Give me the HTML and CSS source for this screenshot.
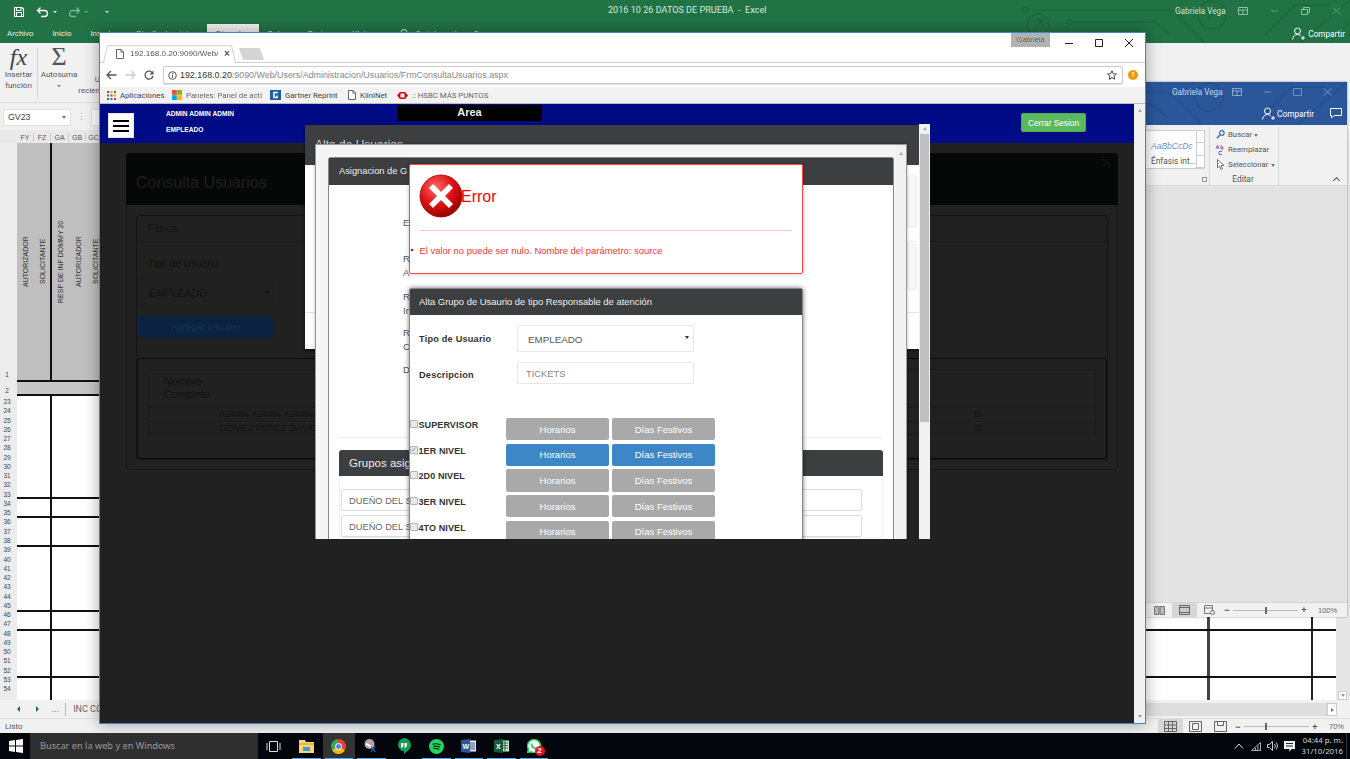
FILE: index.html
```html
<!DOCTYPE html>
<html lang="es">
<head>
<meta charset="utf-8">
<title>Consulta Usuarios</title>
<link rel="stylesheet" href="styles.css">
</head>
<body>
<div class="desktop">

  <section class="excel">
    <svg class="circuit" viewBox="0 0 350 43" width="350" height="43"><g fill="none" stroke="#1b6a3d" stroke-width="1.6"><circle cx="25" cy="10" r="2.5"/><path d="M28 10H172L205 43"/><circle cx="69" cy="22" r="2.5"/><path d="M72 22H155L170 35"/><circle cx="38" cy="25" r="11"/><path d="M33 30 42 21M36 20h7v7"/><circle cx="212" cy="15" r="14"/><path d="M207 20 217 10M209 9h9v9"/><path d="M265 35 295 5H330M300 43 350 0M330 43 350 22"/></g></svg>
    <header class="xl-title">
      <div class="qat">
        <svg width="12" height="12" viewBox="0 0 12 12"><path d="M1.5 1.5h7.5l1.5 1.5v7.5h-9z M3.5 1.5v3h4.5v-3M3.5 10.500v-4h5v4" fill="none" stroke="#fff" stroke-width="1.1"/></svg>
        <svg width="14" height="12" viewBox="0 0 14 12"><path d="M2 4.500h6.500a3 3 0 0 1 0 6H5M4.500 1.500 1.500 4.500l3 3" fill="none" stroke="#fff" stroke-width="1.3"/></svg>
        <span class="caret-w"></span>
        <svg class="dim" width="14" height="12" viewBox="0 0 14 12"><path d="M12 4.500H5.500a3 3 0 0 0 0 6H9M9.500 1.500l3 3-3 3" fill="none" stroke="#7fb59a" stroke-width="1.300"/></svg>
        <span class="caret-w dim-caret"></span>
        <span class="caret-w custom"></span>
      </div>
      <p class="xl-doc">2016 10 26 DATOS DE PRUEBA  -  Excel</p>
      <div class="win-ctl">
        <span class="win-user">Gabriela Vega</span>
        <svg width="10" height="8" viewBox="0 0 10 8"><path d="M.5.500h9v7h-9zM.5 3h9M5 3v4.500" fill="none" stroke="#8fbfa5"/></svg>
        <svg width="9" height="8" viewBox="0 0 9 8"><path d="M1 4h7" stroke="#5fa17e"/></svg>
        <svg width="9" height="8" viewBox="0 0 9 8"><path d="M.5 2.500h6v5h-6zM2.500 2.500v-2h6v5h-2" fill="none" stroke="#8fbfa5"/></svg>
        <svg width="9" height="8" viewBox="0 0 9 8"><path d="M.5.500l8 7M8.500.500l-8 7" stroke="#5fa17e"/></svg>
      </div>
    </header>
    <nav class="xl-tabs">
      <span class="xl-tab">Archivo</span><span class="xl-tab">Inicio</span><span class="xl-tab">Insertar</span><span class="xl-tab">Diseño de página</span><span class="xl-tab xl-tab-on">Fórmulas</span><span class="xl-tab">Datos</span><span class="xl-tab">Revisar</span><span class="xl-tab">Vista</span>
      <svg class="xl-lens" width="9" height="9" viewBox="0 0 9 9"><circle cx="5" cy="3.500" r="3" fill="none" stroke="#e8f2ec"/><path d="M3 6 .5 8.500" stroke="#e8f2ec"/></svg>
      <span class="xl-search">¿Qué desea hacer?</span>
      <span class="xl-share">
        <svg width="13" height="13" viewBox="0 0 13 13"><circle cx="5.500" cy="4" r="3" fill="none" stroke="#fff"/><path d="M.5 12.500c.5-3.500 2.500-5 5-5 1.500 0 2.500.5 3.500 1.500M9 11h4M11 9v4" fill="none" stroke="#fff"/></svg>
        Compartir
      </span>
    </nav>
    <div class="xl-ribbon">
      <div class="xl-tool"><i class="fx">fx</i><span>Insertar<br>función</span></div>
      <div class="xl-sep"></div>
      <div class="xl-tool"><b class="sigma">Σ</b><span>Autosuma</span><span class="tiny-caret"></span></div>
      <div class="xl-tool xl-tool-rec"><span>U<br>recien</span></div>
    </div>
    <div class="xl-formula">
      <div class="namebox"><span>GV23</span><i class="caret-g"></i></div>
      <span class="fdots">⋮</span>
      <div class="fbox"></div>
    </div>
    <div class="xl-colhead">
      <span class="ch corner"></span><span class="ch w17">FY</span><span class="ch w17">FZ</span><span class="ch w18">GA</span><span class="ch w17">GB</span><span class="ch w16">GC</span>
    </div>
    <div class="xl-sheet">
      <div class="rowheads">
        <span class="rh rh-1">1</span><span class="rh rh-2">2</span>
        <span class="rh">23</span><span class="rh">24</span><span class="rh">25</span><span class="rh">26</span><span class="rh">27</span><span class="rh">28</span><span class="rh">29</span><span class="rh">30</span><span class="rh">31</span><span class="rh">32</span><span class="rh">33</span><span class="rh">34</span><span class="rh">35</span><span class="rh">36</span><span class="rh">37</span><span class="rh">38</span><span class="rh">39</span><span class="rh">40</span><span class="rh">41</span><span class="rh">42</span><span class="rh">43</span><span class="rh">44</span><span class="rh">45</span><span class="rh">46</span><span class="rh">47</span><span class="rh">48</span><span class="rh">49</span><span class="rh">50</span><span class="rh">51</span><span class="rh">52</span><span class="rh">53</span><span class="rh">54</span>
      </div>
      <div class="cells">
        <div class="r-head">
          <span class="vt w17">AUTORIZADOR</span><span class="vt w17 vt-end">SOLICITANTE</span><span class="vt w18">RESP DE INF DOMMY 20</span><span class="vt w17">AUTORIZADOR</span><span class="vt w16">SOLICITANTE</span>
        </div>
        <div class="r-sub"></div>
        <div class="r-data h103"><i class="c1"></i><i class="c2"></i><i class="c3"></i></div>
        <div class="r-data h19"><i class="c1"></i><i class="c2"></i><i class="c3"></i></div>
        <div class="r-data h29"><i class="c1"></i><i class="c2"></i><i class="c3"></i></div>
        <div class="r-data h65"><i class="c1"></i><i class="c2"></i><i class="c3"></i></div>
        <div class="r-data h19"><i class="c1"></i><i class="c2"></i><i class="c3"></i></div>
        <div class="r-data h47"><i class="c1"></i><i class="c2"></i><i class="c3"></i></div>
        <div class="r-data h22"><i class="c1"></i><i class="c2"></i><i class="c3"></i></div>
      </div>
      <div class="xl-vscroll"><span class="sb-btn"><i class="tri-d"></i></span></div>
    </div>
    <div class="xl-sheettabs">
      <i class="nav-l"></i><i class="nav-r"></i><span class="dots">...</span><span class="tabsep"></span><span class="sheetname">INC CO</span>
      <div class="hscroll"><span class="sb-btn"><i class="tri-r"></i></span></div>
    </div>
    <footer class="xl-status">
      <span>Listo</span>
      <div class="views">
        <span class="view view-on"><svg width="13" height="11" viewBox="0 0 13 11"><path d="M.5.500h12v10H.5zM.5 4h12M.5 7.500h12M4.500.500v10M8.500.500v10" fill="none" stroke="#666"/></svg></span>
        <span class="view"><svg width="13" height="11" viewBox="0 0 13 11"><path d="M.5.500h12v10H.5zM3.500 2.500h6v6h-6z" fill="none" stroke="#666"/></svg></span>
        <span class="view"><svg width="13" height="11" viewBox="0 0 13 11"><path d="M.5.500h12v10H.5zM3.500.500v4h6v-4" fill="none" stroke="#666"/></svg></span>
        <span class="zm">−</span><span class="slider"><i class="thumb thumb-70"></i></span><span class="zm">+</span><span class="pct">70%</span>
      </div>
    </footer>
  </section>

  <section class="word">
    <svg class="circuit" viewBox="0 0 350 43" width="350" height="43"><g fill="none" stroke="#26508f" stroke-width="1.600"><path d="M0 10H172L205 43M0 22H155L170 35"/><circle cx="212" cy="15" r="14"/><path d="M265 35 295 5H330M300 43 350 0"/></g></svg>
    <header class="wd-title">
      <span class="win-user">Gabriela Vega</span>
      <svg width="10" height="8" viewBox="0 0 10 8"><path d="M.5.500h9v7h-9zM.5 3h9M5 3v4.500" fill="none" stroke="#8fa8d0"/></svg>
      <svg width="9" height="8" viewBox="0 0 9 8"><path d="M1 4h7" stroke="#6f8fc2"/></svg>
      <svg width="9" height="8" viewBox="0 0 9 8"><path d="M.5.500h8v7h-8z" fill="none" stroke="#6f8fc2"/></svg>
      <svg width="9" height="8" viewBox="0 0 9 8"><path d="M.5.500l8 7M8.500.500l-8 7" stroke="#6f8fc2"/></svg>
    </header>
    <div class="wd-share">
      <svg width="13" height="13" viewBox="0 0 13 13"><circle cx="5.500" cy="4" r="3" fill="none" stroke="#fff"/><path d="M.5 12.500c.5-3.500 2.500-5 5-5 1.500 0 2.500.5 3.500 1.500M9 11h4M11 9v4" fill="none" stroke="#fff"/></svg>
      <span>Compartir</span>
      <svg class="wd-comment" width="12" height="11" viewBox="0 0 12 11"><path d="M.5.500h11v7H4l-2.500 2.500v-2.500h-1z" fill="none" stroke="#fff"/></svg>
    </div>
    <div class="wd-ribbon">
      <div class="gallery">
        <div class="style-card"><i class="sample">AaBbCcDc</i><span>Énfasis int...</span></div>
        <div class="g-btns"><i></i><i></i><i></i></div>
      </div>
      <span class="launcher"></span>
      <div class="edit-group">
        <span class="edit-item"><span class="ei"><svg width="9" height="9" viewBox="0 0 9 9"><circle cx="5.800" cy="3" r="2.300" fill="none" stroke="#3a6fb5" stroke-width="1.200"/><path d="M4 5 .8 8.200" stroke="#3a6fb5" stroke-width="1.500"/></svg></span>Buscar <i class="caret-g"></i></span>
        <span class="edit-item"><span class="ei"><svg width="11" height="11" viewBox="0 0 11 11"><path d="M1 5 2.500 1 4 5M1.500 3.500h2M6 1v4h2V3H6" fill="none" stroke="#8a4fa8" stroke-width=".8"/><path d="M7 7.500H4v3h3" fill="none" stroke="#3a6fb5" stroke-width=".9"/></svg></span>Reemplazar</span>
        <span class="edit-item"><span class="ei"><svg width="9" height="11" viewBox="0 0 9 11"><path d="M1.500.500v8.500l2-2 1.500 3.500 1.500-.7-1.500-3.300h3z" fill="#fff" stroke="#777"/></svg></span>Seleccionar<i class="caret-g"></i></span>
        <span class="edit-name">Editar</span>
      </div>
      <i class="collapse"></i>
    </div>
    <div class="wd-doc"></div>
    <footer class="wd-status">
      <span class="view"><svg width="11" height="9" viewBox="0 0 11 9"><path d="M.5.500h4.500v8H.5zM6 .500h4.500v8H6z" fill="#bbb" stroke="#777"/></svg></span>
      <span class="view view-on"><svg width="11" height="10" viewBox="0 0 11 10"><path d="M.5.500h10v9H.5zM.5 2.500h10M.5 7.500h10" fill="#ccc" stroke="#666"/></svg></span>
      <span class="view"><svg width="11" height="10" viewBox="0 0 11 10"><path d="M.5.500h8v8H.5zM.5 3h8" fill="none" stroke="#777"/><circle cx="8.500" cy="7.500" r="2" fill="#eee" stroke="#666"/></svg></span>
      <span class="zm">−</span><span class="slider slider-wd"><i class="thumb thumb-100"></i></span><span class="zm">+</span><span class="pct">100%</span>
    </footer>
  </section>

  <section class="chrome">
    <div class="ch-tabs">
      <div class="ch-tab">
        <svg width="8" height="10" viewBox="0 0 8 10"><path d="M.5.500h4.500l2.500 2.500v6.500h-7zM5 .5v2.500h2.500" fill="#fff" stroke="#666"/></svg>
        <span class="ch-tabtext">192.168.0.20:9090/Web/</span>
        <span class="ch-tabx">×</span>
      </div>
      <span class="ch-new"></span>
      <span class="ch-badge">Gabriela</span>
      <div class="ch-ctl">
        <svg width="10" height="10" viewBox="0 0 10 10"><path d="M1 5.500h8" stroke="#222" stroke-width="1"/></svg>
        <svg width="10" height="10" viewBox="0 0 10 10"><path d="M1.500 1.500h7v7h-7z" fill="none" stroke="#222"/></svg>
        <svg width="10" height="10" viewBox="0 0 10 10"><path d="M1 1l8 8M9 1 1 9" stroke="#222"/></svg>
      </div>
    </div>
    <div class="ch-tool">
      <svg width="11" height="10" viewBox="0 0 11 10"><path d="M10.500 5H1.500M5 1 1 5l4 4" fill="none" stroke="#555" stroke-width="1.300"/></svg>
      <svg width="11" height="10" viewBox="0 0 11 10"><path d="M.5 5h9M6 1l4 4-4 4" fill="none" stroke="#ccc" stroke-width="1.300"/></svg>
      <svg width="10" height="10" viewBox="0 0 10 10"><path d="M8.500 3A4 4 0 1 0 9 6" fill="none" stroke="#555" stroke-width="1.300"/><path d="M9.500.500v4h-4z" fill="#555"/></svg>
      <div class="omni">
        <svg width="9" height="9" viewBox="0 0 9 9"><circle cx="4.500" cy="4.500" r="3.800" fill="none" stroke="#555"/><path d="M4.500 3.800v3M4.500 2v1" stroke="#555"/></svg>
        <span class="url"><b>192.168.0.20</b>:9090/Web/Users/Administracion/Usuarios/FrmConsultaUsuarios.aspx</span>
        <svg class="star" width="10" height="10" viewBox="0 0 10 10"><path d="M5 .8 6.300 3.700l3.100.3-2.300 2.100.7 3.100L5 7.600 2.200 9.200l.7-3.100L.6 4l3.100-.3z" fill="none" stroke="#444"/></svg>
      </div>
      <span class="warn">!</span>
    </div>
    <div class="ch-marks">
      <span class="mark"><svg width="9" height="9" viewBox="0 0 9 9"><g><rect width="2" height="2" fill="#d93025"/><rect x="3.500" width="2" height="2" fill="#f9ab00"/><rect x="7" width="2" height="2" fill="#1e8e3e"/><rect y="3.500" width="2" height="2" fill="#1a73e8"/><rect x="3.500" y="3.500" width="2" height="2" fill="#d93025"/><rect x="7" y="3.500" width="2" height="2" fill="#f9ab00"/><rect y="7" width="2" height="2" fill="#1e8e3e"/><rect x="3.500" y="7" width="2" height="2" fill="#1a73e8"/><rect x="7" y="7" width="2" height="2" fill="#d93025"/></g></svg>Aplicaciones</span>
      <span class="mark"><svg width="10" height="10" viewBox="0 0 10 10"><rect width="4.800" height="4.800" fill="#f25022"/><rect x="5.200" width="4.800" height="4.800" fill="#7fba00"/><rect y="5.200" width="4.800" height="4.800" fill="#00a4ef"/><rect x="5.200" y="5.200" width="4.800" height="4.800" fill="#ffb900"/></svg><span class="fade">Paneles: Panel de acti</span></span>
      <span class="mark"><svg width="11" height="10" viewBox="0 0 11 10"><rect width="11" height="10" fill="#1f5f9e"/><path d="M8 2.500H4v5h3V5.500" fill="none" stroke="#fff" stroke-width="1.500"/></svg>Gartner Reprint</span>
      <span class="mark"><svg width="8" height="10" viewBox="0 0 8 10"><path d="M.5.500h4.500l2.500 2.500v6.500h-7zM5 .5v2.500h2.500" fill="#fff" stroke="#666"/></svg>KiiniNet</span>
      <span class="mark"><svg width="11" height="7" viewBox="0 0 11 7"><path d="M0 3.500 3 0h5l3 3.500L8 7H3z" fill="#db0011"/><rect x="3.500" y="1.500" width="4" height="4" fill="#fff"/></svg><span class="fade">:: HSBC MÁS PUNTOS</span></span>
    </div>
    <div class="ch-page">
      <div class="page-main">
        <header class="app-head">
          <button class="burger"><i></i><i></i><i></i></button>
          <div class="app-user"><span>ADMIN ADMIN ADMIN</span><span>EMPLEADO</span></div>
          <div class="app-area">Area</div>
          <button class="logout">Cerrar Sesion</button>
        </header>
        <main class="app-body">
          <div class="card">
            <div class="card-head"><h1>Consulta Usuarios</h1><span class="card-x">×</span></div>
            <div class="card-body">
              <div class="filters">
                <div class="filters-head">Filtros</div>
                <div class="filters-body">
                  <label class="f-label">Tipo de Usuario</label>
                  <div class="f-select">EMPLEADO<i class="tri-dk"></i></div>
                  <div class="f-btn">Agregar Usuario</div>
                </div>
                <div class="results">
                  <div class="res-table">
                    <div class="res-head">Nombre<br>Completo</div>
                    <div class="res-row"><span class="r-name">ADMIN ADMIN ADMIN</span><span class="r-si">SI</span></div>
                    <div class="res-row"><span class="r-name">GOMEZ PEREZ DAVID</span><span class="r-si">SI</span></div>
                  </div>
                </div>
              </div>
            </div>
          </div>
        </main>

        <div class="overlay">
          <div class="modal-a">
            <div class="modal-a-head">Alta de Usuarios</div>
            <div class="modal-a-body"><i class="ghost g1"></i><i class="ghost g2"></i></div>
            <div class="modal-a-foot"></div>
          </div>
          <div class="modal-a-scroll"><i class="tri-u"></i><span class="thumb-v"></span></div>

          <div class="modal-b">
            <div class="panel panel-main">
              <div class="panel-head">Asignacion de G</div>
              <div class="panel-body">
                <div class="lost-labels">
                  <span class="lost l1">E</span>
                  <span class="lost l2">R<br>A</span>
                  <span class="lost l3">R<br>In</span>
                  <span class="lost l4">R<br>C</span>
                  <span class="lost l5">D</span>
                </div>
                <hr class="rule">
                <div class="panel panel-sub">
                  <div class="panel-head panel-head-lg">Grupos asig</div>
                  <div class="panel-body sub-body">
                    <div class="grp-input">DUEÑO DEL S</div>
                    <div class="grp-input">DUEÑO DEL S</div>
                  </div>
                </div>
              </div>
            </div>
            <div class="modal-b-scroll"><i class="tri-u"></i></div>
          </div>

          <div class="stack">
            <div class="err">
              <div class="err-head">
                <svg class="err-icon" width="44" height="44" viewBox="0 0 44 44">
                  <defs><radialGradient id="erg" cx="38%" cy="30%" r="75%"><stop offset="0" stop-color="#ff6a6a"/><stop offset=".55" stop-color="#e00f12"/><stop offset="1" stop-color="#8c0000"/></radialGradient></defs>
                  <circle cx="22" cy="22" r="21" fill="url(#erg)" stroke="#900" stroke-width=".8"/>
                  <path d="M14 10 22 18 30 10 34 14 26 22 34 30 30 34 22 26 14 34 10 30 18 22 10 14z" fill="#fff"/>
                </svg>
                <h2>Error</h2>
              </div>
              <ul class="err-list"><li>El valor no puede ser nulo. Nombre del parámetro: source</li></ul>
            </div>
            <div class="grp">
              <div class="panel-head grp-head">Alta Grupo de Usaurio de tipo Responsable de atención</div>
              <div class="grp-body">
                <div class="fields">
                  <label>Tipo de Usuario</label>
                  <div class="fld fld-sel">EMPLEADO<i class="tri-bk"></i></div>
                  <label class="lab-desc">Descripcion</label>
                  <div class="fld fld-txt">TICKETS</div>
                </div>
                <div class="levels">
                  <div class="lvl"><input class="cb" type="checkbox" disabled><span class="lvl-name">SUPERVISOR</span><button class="b">Horarios</button><button class="b">Días Festivos</button></div>
                  <div class="lvl"><input class="cb" type="checkbox" checked disabled><span class="lvl-name">1ER NIVEL</span><button class="b b-on">Horarios</button><button class="b b-on">Días Festivos</button></div>
                  <div class="lvl"><input class="cb" type="checkbox" disabled><span class="lvl-name">2D0 NIVEL</span><button class="b">Horarios</button><button class="b">Días Festivos</button></div>
                  <div class="lvl"><input class="cb" type="checkbox" disabled><span class="lvl-name">3ER NIVEL</span><button class="b">Horarios</button><button class="b">Días Festivos</button></div>
                  <div class="lvl"><input class="cb" type="checkbox" disabled><span class="lvl-name">4TO NIVEL</span><button class="b">Horarios</button><button class="b">Días Festivos</button></div>
                </div>
              </div>
            </div>
          </div>
        </div>
      </div>
      <aside class="page-scroll"><i class="tri-u"></i><i class="tri-d"></i></aside>
    </div>
  </section>

  <footer class="taskbar">
    <span class="tb-start"><svg width="14" height="14" viewBox="0 0 14 14"><path d="M0 2 6 1v5.500H0zM7 .9 14 0v6.500H7zM0 7.500h6V13L0 12zM7 7.500h7V14l-7-1z" fill="#fff"/></svg></span>
    <div class="tb-search">Buscar en la web y en Windows</div>
    <span class="tb-task"><svg width="15" height="11" viewBox="0 0 15 11"><path d="M3.500.500h8v10h-8zM1 2v7M14 2v7" fill="none" stroke="#ddd"/></svg></span>
    <span class="tb-app on"><svg width="15" height="14" viewBox="0 0 15 14"><path d="M0 1h6l1 2h8v11H0z" fill="#f5d47a"/><path d="M0 4h15v2H0z" fill="#e8b94a"/><rect x="4" y="8" width="7" height="4" fill="#3a9bd9"/></svg></span>
    <span class="tb-app on active"><i class="chrome-logo"><i></i></i></span>
    <span class="tb-app on"><svg width="14" height="14" viewBox="0 0 14 14"><circle cx="5.500" cy="5" r="5" fill="#b9a2a6"/><path d="M2 5 8 8" stroke="#fff" stroke-width="2"/><path d="M7 7l4 6M11 7l-4 6" stroke="#1f6fb5" stroke-width="1.200"/></svg></span>
    <span class="tb-app on-s"><svg width="14" height="16" viewBox="0 0 14 16"><path d="M7 0a7 7 0 0 1 7 7c0 4-4 6.500-7 9v-2.500A6.800 6.800 0 0 1 7 0z" fill="#0f9d58"/><path d="M4 5h2.500v2.500L5 10H4zM7.500 5H10v2.500L8.500 10h-1z" fill="#fff"/></svg></span>
    <span class="tb-app on"><svg width="15" height="15" viewBox="0 0 15 15"><circle cx="7.500" cy="7.500" r="7.500" fill="#1ed760"/><path d="M3.500 5.200c2.500-.8 5.500-.6 8 .7M4 7.600c2.200-.6 4.800-.4 6.800.7M4.500 9.800c1.800-.4 3.800-.3 5.500.6" fill="none" stroke="#111" stroke-width="1.100"/></svg></span>
    <span class="tb-app on"><svg width="15" height="14" viewBox="0 0 15 14"><rect x="6" y="1.500" width="9" height="11" fill="#e8edf5"/><path d="M8 4h6M8 6h6M8 8h6M8 10h6" stroke="#2b579a"/><path d="M0 1 9 0v14L0 13z" fill="#2b579a"/><text class="ltr" x="1.500" y="9.500">W</text></svg></span>
    <span class="tb-app on"><svg width="15" height="14" viewBox="0 0 15 14"><rect x="6" y="1.500" width="9" height="11" fill="#cfe5d8"/><path d="M8 4h6M8 6.500h6M8 9h6M11 2v10" stroke="#217346"/><path d="M0 1 9 0v14L0 13z" fill="#185c37"/><text class="ltr" x="2" y="9.500">X</text></svg></span>
    <span class="tb-app on tb-wa"><svg width="14" height="14" viewBox="0 0 14 14"><path d="M7 .5a6.500 6.500 0 1 1-3 12.300L.5 13.500l.9-3.300A6.500 6.500 0 0 1 7 .5z" fill="#fff" stroke="#25d366" stroke-width="1.500"/><path d="M4.500 4.500c0 3 2 5 5 5" fill="none" stroke="#25d366" stroke-width="1.800"/></svg><b class="wa-badge">2</b></span>
    <div class="tray">
      <svg width="10" height="6" viewBox="0 0 10 6"><path d="M1 5.500 5 1l4 4.500" fill="none" stroke="#ddd"/></svg>
      <svg width="11" height="10" viewBox="0 0 11 10"><path d="M10.500 1.500v8H1.500zM10.500 4.500v5M8 4.500v5M5.500 7v2.500" fill="none" stroke="#aaa"/></svg>
      <svg width="11" height="10" viewBox="0 0 11 10"><path d="M.5 3.500h2l3-3v9l-3-3h-2zM7.500 3a3 3 0 0 1 0 4M9 1.500a5 5 0 0 1 0 7" fill="none" stroke="#ccc"/></svg>
      <svg width="11" height="11" viewBox="0 0 11 11"><path d="M0 0h11v8H7.500L5.500 11V8H0z" fill="#eee"/><path d="M2 2.500h7M2 5h7" stroke="#222"/></svg>
      <div class="clock"><span>04:44 p. m.</span><span>31/10/2016</span></div>
    </div>
  </footer>
</div>
</body>
</html>
```

FILE: styles.css
```css
*{box-sizing:border-box}
html,body{margin:0;padding:0;height:100%;overflow:hidden;background:#000}
body{font-family:"Liberation Sans",Arial,sans-serif}
.desktop{position:relative;width:1350px;height:759px;overflow:hidden}
h1,h2,p,ul{margin:0;padding:0}
button{font-family:inherit;border:0;padding:0}

/* Excel window */
.excel{position:absolute;left:0;top:0;width:1350px;height:733px;display:flex;flex-direction:column;background:#f1f1f1;font-family:Roboto,sans-serif;font-size:8.500px;color:#444;isolation:isolate}
.circuit{position:absolute;right:0;top:0}
.xl-title{position:relative;height:23px;background:#217346;display:flex;align-items:center;color:#fff}
.excel>.circuit{z-index:1}
.xl-title>*,.xl-tabs>*{z-index:2;position:relative}
.xl-tabs{position:relative}
.qat{display:flex;align-items:center;gap:3px;padding-left:13px;width:300px}
.qat svg:nth-child(2){margin-left:8px}
.qat .dim{margin-left:7px}
.caret-w{width:0;height:0;border:2px solid transparent;border-top:2.500px solid #fff;margin-top:3px}
.dim-caret{border-top-color:#6ea98a}
.custom{margin-left:14px;border-top-color:#cfe3d8}
.xl-doc{position:absolute;left:608px;top:5px;font-size:9.100px;color:#d6e8de;white-space:pre}
.win-ctl{position:absolute;left:1175px;top:5px;display:flex;align-items:center;gap:22px;height:12px}
.win-user{font-size:8.200px;color:#cfe3d8;white-space:nowrap}
.win-ctl .win-user{margin-right:-6px;width:47px}
.xl-tabs{height:20px;background:#217346;display:flex;align-items:center;color:#e8f2ec;padding-top:1px}
.xl-tab{padding:0 9.500px;height:100%;display:flex;align-items:center;font-size:7.900px;white-space:nowrap}
.xl-tab:first-child{padding-left:7px}
.xl-tab-on{background:#f1f1f1;color:#217346}
.xl-lens{margin-left:19px}
.xl-search{margin-left:4px;font-size:7.900px;white-space:nowrap}
.xl-share{margin-left:auto;margin-right:5px;display:flex;align-items:center;gap:3px;font-size:8.200px;color:#fff}
.xl-ribbon{height:60px;display:flex;padding:3px 0 0 0;border-bottom:1px solid #ddd}
.xl-tool{width:37px;display:flex;flex-direction:column;align-items:center;text-align:center;line-height:10.500px;color:#555;font-size:8px}
.xl-tool:nth-child(3){width:42px}
.xl-tool-rec{width:20px;padding-top:29px;align-items:flex-end;text-align:right;white-space:nowrap}
.xl-sep{width:1px;height:50px;background:#d5d5d5;margin:2px 0 0 0}
.fx{font:italic 24px "Liberation Serif",serif;line-height:23px;height:23px;color:#444;margin-bottom:1px}
.sigma{font:normal 26px "Liberation Serif",serif;line-height:22px;height:22px;color:#555;margin-bottom:2px}
.tiny-caret{width:0;height:0;border:2px solid transparent;border-top:2.500px solid #777;margin-top:4px}
.xl-formula{height:27px;display:flex;align-items:center;padding:1px 0 0 3px;background:#f0f0f0}
.namebox{width:68px;height:17px;background:#fff;border:1px solid #e0e0e0;display:flex;align-items:center;justify-content:space-between;padding:0 4px;font-size:8.800px;color:#444;font-family:"Liberation Sans",sans-serif}
.caret-g{display:inline-block;width:0;height:0;border:2.500px solid transparent;border-top:3px solid #777;margin-top:3px}
.fdots{width:20px;text-align:center;color:#aaa;font-size:9px}
.fbox{width:40px;height:17px;background:#fff;border:1px solid #e0e0e0}
.xl-colhead{height:13px;background:#e9e9e9;display:flex;align-items:flex-end;font:7px/9px "Liberation Sans",sans-serif;color:#555;padding-bottom:1px}
.ch{text-align:center;display:block;border-right:1px solid #ccc}
.corner{width:17px;border:0}
.w17{width:17px}.w18{width:18px}.w16{width:16px}
.xl-sheet{flex:1;display:flex;min-height:0;background:#e6e6e6}
.rowheads{width:17px;display:flex;flex-direction:column;background:#ececec;flex:none;overflow:hidden}
.rh{height:9.270px;flex:none;font:6.500px/9.270px "Liberation Sans",sans-serif;color:#444;text-align:center;display:block;padding-right:3px}
.rh-1{height:237px;line-height:12px;padding-top:226px}
.rh-2{height:17px;line-height:12px;padding-top:5px}
.cells{width:1319px;flex:none;display:flex;flex-direction:column;background:#fff}
.r-head{height:237px;background:#bfbfbf;display:flex}
.vt{writing-mode:vertical-rl;transform:rotate(180deg);text-align:center;font:7px/17px "Liberation Sans",sans-serif;color:#333;display:block}
.vt-end{border-left:2px solid #111;width:18px}
.r-sub{height:16px;background:#c6c6c6;border-top:2px solid #111;border-bottom:2px solid #111}
.r-data{display:flex;border-bottom:2px solid #111}
.r-data:last-child{border-bottom:0}
.h103{height:103px}.h19{height:19px}.h29{height:29px}.h65{height:65px}.h47{height:47px}.h22{height:22px}
.c1{width:35px;border-right:2px solid #111;display:block}
.c2{width:1158px;border-right:3px solid #444;display:block}
.c3{width:103px;border-right:2px solid #222;display:block}
.xl-vscroll{flex:1;background:#e6e6e6;display:flex;align-items:flex-end;justify-content:center;padding-right:1px}
.sb-btn{width:9px;height:9px;background:#fff;border:1px solid #ccc;display:flex;align-items:center;justify-content:center}
.tri-d{display:block;width:0;height:0;border:2.500px solid transparent;border-top:3px solid #999;border-bottom:0}
.tri-r{display:block;width:0;height:0;border:2.500px solid transparent;border-left:3px solid #777;border-right:0}
.tri-u{display:block;width:0;height:0;border:2.500px solid transparent;border-bottom:3px solid #aaa;border-top:0}
.xl-sheettabs{height:18px;display:flex;align-items:center;background:#f1f1f1;padding-left:17px;position:relative}
.nav-l,.nav-r{display:block;width:0;height:0;border:3px solid transparent}
.nav-l{border-right:3.500px solid #217346;border-left:0}
.nav-r{border-left:3.500px solid #217346;border-right:0;margin-left:16px}
.dots{margin-left:13px;color:#217346;font-size:9px}
.tabsep{width:1px;height:13px;background:#bbb;margin-left:6px}
.sheetname{margin-left:7px;font-size:9px;color:#666}
.hscroll{position:absolute;left:1146px;right:13px;top:3px;height:13px;background:#dedede;display:flex;justify-content:flex-end}
.hscroll .sb-btn{height:13px;width:10px}
.xl-status{height:15px;background:#f1f1f1;display:flex;align-items:center;padding-left:5px;font-size:8px;color:#555;position:relative;border-top:1px solid #e0e0e0}
.views{position:absolute;left:1158px;top:0;height:15px;display:flex;align-items:center}
.view{width:25px;height:100%;display:flex;align-items:center;justify-content:center}
.view-on{background:#d6d6d6}
.zm{font:bold 9px "Liberation Sans",sans-serif;color:#555;width:10px;text-align:center}
.slider{position:relative;width:65px;height:1px;background:#bbb;margin:0 1px}
.thumb{position:absolute;top:-3px;width:2px;height:7px;background:#666}
.thumb-70{left:21px}
.thumb-100{left:32px}
.pct{margin-left:9px;font:7.500px "Liberation Sans",sans-serif;color:#666}

/* Word window */
.word{position:absolute;left:1000px;top:82px;width:347px;height:535px;display:flex;flex-direction:column;background:#e3e3e3;font-family:Roboto,sans-serif;color:#555;box-shadow:0 0 2px rgba(0,0,0,.4);overflow:hidden;isolation:isolate}
.word .circuit{z-index:1}
.wd-title{position:relative;z-index:2;height:20px;display:flex;align-items:center;gap:21px;padding-left:172px}
.wd-share{position:relative;z-index:2;height:23px;display:flex;align-items:center;gap:2px;padding-left:262px;color:#fff;font-size:8.300px}
.word::before{content:"";position:absolute;left:0;top:0;width:100%;height:43px;background:#2b579a}
.wd-title .win-user{width:47px;margin-right:-8px;color:#c4d3ea}
.wd-comment{margin-left:14px}
.wd-ribbon{height:61px;background:#f1f1f1;display:flex;padding-left:146px;padding-top:5px;position:relative;border-bottom:1px solid #d8d8d8;font-size:7.800px}
.gallery{display:flex;height:39px;border:1px solid #ccc;border-left:0;background:#fff;width:59px}
.style-card{width:50px;display:flex;flex-direction:column;padding:9px 0 0 5px;overflow:hidden;white-space:nowrap;font-size:8.300px;line-height:12px;color:#555;gap:3px}
.sample{color:#5b9bd5;font-size:8.500px;font-family:"Liberation Sans",sans-serif}
.g-btns{width:8px;border-left:1px solid #ccc;display:flex;flex-direction:column}
.g-btns i{flex:1;border-bottom:1px solid #ccc}
.launcher{width:5px;height:5px;border:1px solid #999;margin:47px 0 0 -3px}
.edit-group{margin:-3px 0 0 2px;width:70px;border-left:1px solid #d8d8d8;border-right:1px solid #d8d8d8;display:flex;flex-direction:column;padding-left:4px;height:58px;color:#555}
.edit-item{height:15px;display:flex;align-items:center;gap:2px;white-space:nowrap}
.ei{width:12px;display:flex;align-items:center;justify-content:center;flex:none}
.edit-name{text-align:center;margin-top:2px;padding-right:6px;font-size:8.300px}
.collapse{position:absolute;left:334px;top:53px;width:5px;height:5px;border-left:1px solid #555;border-top:1px solid #555;transform:rotate(45deg)}
.wd-doc{flex:1}
.wd-status{height:15px;background:#f1f1f1;border-top:1px solid #d5d5d5;display:flex;align-items:center;padding-left:147px;font-size:7.500px}
.wd-status .view{height:100%}
.slider-wd{width:65px}
.wd-status .zm:first-of-type{margin-left:8px}

/* Chrome */
.chrome{position:absolute;left:99px;top:32px;width:1047px;height:692px;border:1px solid #3f86c4;background:#fff;display:flex;flex-direction:column;box-shadow:0 0 14px rgba(0,0,0,.35);font-family:Roboto,sans-serif}
.ch-tabs{height:30px;background:#fff;display:flex;align-items:flex-end;position:relative;padding-left:3px;border-bottom:1px solid #cfcfcf}
.ch-tab{width:133px;height:19px;display:flex;align-items:center;padding-left:13px;gap:6px;position:relative;isolation:isolate;margin-bottom:-1px}
.ch-tab::before{content:"";position:absolute;inset:0;z-index:-1;border:1px solid #cfcfcf;border-bottom:0;background:#fff;transform:perspective(40px) rotateX(8deg);transform-origin:bottom}
.ch-tabtext{font:8.100px "Liberation Sans",sans-serif;color:#555;width:88px;overflow:hidden;white-space:nowrap}
.ch-tabx{font:bold 10px "Liberation Sans",sans-serif;color:#555}
.ch-new{width:21px;height:12px;background:#d4d4d4;margin:0 0 2px 5px;transform:skewX(20deg);border-radius:1px}
.ch-badge{position:absolute;left:911px;top:0;width:39px;height:14px;background:#b2b2b2;color:#444;font:7.500px/14px "Liberation Sans",sans-serif;text-align:center;text-shadow:0 0 1px #fff}
.ch-ctl{position:absolute;left:964px;top:5px;display:flex;gap:20px}
.ch-tool{height:24px;background:#fff;display:flex;align-items:center;padding-left:5px;gap:8px}
.ch-tool>svg:first-child{margin-left:1px}
.omni{width:960px;height:18px;margin-left:1px;border:1px solid #ccc;border-radius:2px;box-shadow:0 1px 1px #ddd;display:flex;align-items:center;padding-left:4px;gap:3px;background:#fff}
.url{font:8.900px "Liberation Sans",sans-serif;color:#888;white-space:nowrap}
.url b{font-weight:400;color:#333}
.star{margin-left:auto;margin-right:5px}
.warn{width:10px;height:10px;border-radius:50%;background:#f29900;color:#fff;font:bold 8px/10px "Liberation Sans",sans-serif;text-align:center;margin-left:-3px}
.ch-marks{height:17px;background:#f2f2f2;border-bottom:1px solid #bbb;display:flex;align-items:center;padding-left:7px;font-size:7.800px;color:#444}
.mark{display:flex;align-items:center;gap:4px;white-space:nowrap}
.mark:nth-child(1){width:65px}
.mark:nth-child(2){width:98px}
.mark:nth-child(3){width:78px}
.mark:nth-child(4){width:49px}
.fade{opacity:.8}
.ch-page{flex:1;display:flex;min-height:0;background:#212121;font-family:"Liberation Sans",sans-serif}
.page-main{position:relative;width:1034px;flex:none;display:flex;flex-direction:column;overflow:hidden}
.page-scroll{flex:1;background:#f1f1f1;display:flex;flex-direction:column;justify-content:space-between;align-items:center;padding:5px 0}

.app-head{height:39px;background:#000b85;position:relative;display:flex;align-items:flex-start;flex:none}
.burger{width:26px;height:25px;background:#fff;margin:9px 0 0 8px;border:1px solid #e6e6e6;display:flex;flex-direction:column;justify-content:center;gap:3px;padding:0 4px;flex:none}
.burger i{display:block;height:2px;background:#000}
.app-user{margin:6px 0 0 32px;display:flex;flex-direction:column;gap:8px;font-size:6.600px;line-height:8px;font-weight:700;color:#fff;white-space:nowrap;width:231px}
.app-area{margin-top:1px;width:145px;height:16px;background:#000;color:#eee;font-size:11px;line-height:14px;font-weight:700;text-align:center}
.logout{margin:9px 0 0 479px;width:65px;height:19px;background:#5cb85c;color:#fff;font-size:8.300px;border-radius:2px;border:1px solid #4cae4c;flex:none}

.app-body{flex:1;padding:10px 16px 0 26px;background:#212121}
.card{height:317px;background:#212121;border:1px solid #171717;border-radius:3px}
.card-head{height:52px;background:#060808;position:relative;padding:21px 0 0 10px;margin:-1px -1px 0;border-radius:3px 3px 0 0}
.card-head h1{font-size:16px;font-weight:400;line-height:17px;color:#1f1f1f}
.card-x{position:absolute;right:6px;top:1px;font-size:18px;font-weight:700;color:#0f0f0f;line-height:18px}
.card-body{padding:10px 9px}
.filters{height:245px;border:1px solid #141414;border-radius:3px;display:flex;flex-direction:column}
.filters-head{height:26px;padding:6px 11px;font-size:11px;color:#121212;border-bottom:1px solid #1c1c1c;flex:none}
.filters-body{height:116px;flex:none;display:flex;flex-direction:column;padding:16px 0 0 1px}
.f-label{font-size:10px;line-height:12px;color:#111;padding-left:10px}
.f-select{width:135px;height:26px;margin-top:9px;border:1px solid #1d1d1d;padding:0 0 0 10px;font-size:10.500px;line-height:26px;color:#121212;position:relative}
.tri-dk{position:absolute;right:3px;top:11px;width:0;height:0;border:2.500px solid transparent;border-top:3px solid #0c0c0c}
.f-btn{width:135px;height:22px;margin-top:11px;background:#0b2340;border-radius:3px;color:#133458;font-size:9.500px;line-height:22px;text-align:center}
.results{flex:1;border:1.500px solid #0b0b0b;border-radius:3px;padding:10px}
.res-table{border:1px solid #1c1c1c;height:66px;font-size:9.300px;color:#131313}
.res-head{height:38px;padding:5px 15px;line-height:13px;border-bottom:1px solid #1c1c1c;font-size:10.700px}
.res-row{height:14px;display:flex;border-bottom:1px solid #1c1c1c;line-height:13px}
.res-row:last-child{border-bottom:0}
.r-name{padding-left:70px;width:825px;white-space:nowrap}

.overlay{position:absolute;left:0;top:0;width:100%;height:435px;overflow:hidden}
.modal-a{position:absolute;left:205px;top:21px;width:614px;height:224px;background:#fff;box-shadow:0 2px 4px rgba(0,0,0,.5);display:flex;flex-direction:column}
.modal-a-head{height:40px;background:#3d3e40;color:#ddd;font-size:12px;padding:13px 10px}
.modal-a-body{height:148px;position:relative;border-bottom:1px solid #e5e5e5}
.ghost{position:absolute;left:602px;width:10px;border:1px solid #eee;border-radius:3px;background:#f7f7f7}
.g1{top:10px;height:53px}.g2{top:76px;height:49px}
.modal-a-foot{flex:1}
.modal-a-scroll{position:absolute;left:819px;top:20px;width:11px;height:415px;background:#f1f1f1;display:flex;flex-direction:column;align-items:center;padding-top:3px}
.thumb-v{display:block;width:9px;height:288px;background:#bfbfbf;margin-top:4px}
.modal-b{position:absolute;left:215px;top:40px;width:592px;height:395px;background:#f5f5f5;border:1px solid #999;border-bottom:0;padding:12px 13px 0 12px;box-shadow:0 0 3px rgba(0,0,0,.3)}
.modal-b-scroll{position:absolute;right:0;top:0;width:10px;height:100%;background:#f1f1f1;display:flex;justify-content:center;padding-top:7px}
.panel-main{width:566px;height:395px;background:#fff;border:1px solid #888;border-bottom:0;border-radius:3px 3px 0 0}
.panel-head{height:27px;background:#3d3e40;color:#eee;font-size:9.300px;line-height:27px;padding-left:10px}
.panel-body{position:relative}
.lost-labels{height:252px;position:relative;font-size:9.500px;line-height:14px;color:#555}
.lost{position:absolute;left:74px}
.l1{top:31px}.l2{top:67px}.l3{top:105px}.l4{top:141px}.l5{top:178px}
.rule{margin:0 10px;border:0;border-top:1px solid #eee}
.panel-sub{margin:12px 10px 0;width:544px;border-radius:3px 3px 0 0}
.panel-head-lg{height:26px;font-size:11.500px;line-height:26px;border-radius:3px 3px 0 0}
.sub-body{padding:13px 20px 0 1px;display:flex;flex-direction:column;gap:4px;border:1px solid #eee;border-top:0}
.grp-input{height:22px;border:1px solid #ddd;border-radius:2px;padding-left:7px;font-size:9.300px;line-height:22px;color:#666;white-space:nowrap}
.stack{position:absolute;left:309px;top:60px;width:394px;display:flex;flex-direction:column;gap:14px}
.err{height:110px;background:#fff;border:1px solid #f44;border-radius:2px;color:#f22;box-shadow:0 0 4px rgba(0,0,0,.25)}
.err-head{height:66px;margin:0 10px;border-bottom:1px solid #f3c9d0;display:flex;padding-top:9px}
.err-icon{margin-left:-1px;flex:none}
.err-head h2{font-size:16px;font-weight:400;line-height:45px;color:#f00;margin-left:-2px}
.err-list{list-style:none;position:relative;padding:13px 0 0 9.500px;font-size:9.450px;line-height:13px;color:#f33}
.err-list li::before{content:"";position:absolute;left:1px;top:18px;width:2px;height:2px;background:#e00}
.grp{height:260px;background:#fff;box-shadow:0 0 5px rgba(0,0,0,.55);border:1px solid #888;border-bottom:0;border-radius:3px 3px 0 0}
.grp-head{height:26px;line-height:26px;padding-left:9px;font-size:9.440px;margin:0}
.grp-body{padding:10px 0 0}
.fields{display:grid;grid-template-columns:98px 177px;grid-template-rows:27px 22px;row-gap:10px;padding-left:9px;align-items:center;color:#333}
.fields label{font-size:9.200px;font-weight:700;letter-spacing:.2px}
.fields .lab-desc{padding-top:4px}
.fld{height:100%;border:1px solid #e8e8e8;border-radius:2px;background:#fff;position:relative;font-size:9.800px;color:#555;display:flex;align-items:center;padding-left:10px}
.fld-sel{padding-top:2px}
.fld-txt{padding-left:8px;color:#888;font-size:9.400px}
.tri-bk{position:absolute;right:4px;top:10px;width:0;height:0;border:2.500px solid transparent;border-top:3.500px solid #333}
.levels{margin-top:34px;display:flex;flex-direction:column;gap:3.400px}
.lvl{display:flex;height:22.300px}
.cb{appearance:none;width:7.500px;height:8px;margin:2px 0 0 0;border:1px solid #b5b5b5;background:#e9e9e9;border-radius:1px;flex:none}
.cb:checked::after{content:"✓";display:block;font:7px/6px "DejaVu Sans",sans-serif;color:#888}
.lvl-name{width:87.500px;margin-left:1px;font-size:9px;font-weight:700;line-height:15px;color:#333;letter-spacing:.1px;white-space:nowrap;flex:none}
.b{width:103px;height:100%;background:#a9a9a9;color:#fff;font-size:9.500px;border-radius:2px;margin-right:3px;flex:none}
.b-on{background:#3e87c7}

/* Taskbar */
.taskbar{position:absolute;left:0;top:733px;width:1350px;height:26px;background:#03060c;display:flex;align-items:center;font-family:"Noto Sans",sans-serif}
.tb-start{width:30px;display:flex;justify-content:center;padding-left:1px}
.tb-search{width:228px;height:26px;background:#2f2f2f;color:#9a9a9a;font-size:9.200px;line-height:26px;padding-left:10px}
.tb-task{width:31px;display:flex;justify-content:center}
.tb-app{width:32.500px;height:26px;display:flex;align-items:center;justify-content:center;position:relative}
.tb-task+.tb-app{margin-left:1px}
.on::after{content:"";position:absolute;left:2px;right:2px;bottom:0;height:1.500px;background:#64a8dc}
.active{background:#333}
.chrome-logo{width:15px;height:15px;border-radius:50%;background:conic-gradient(#ea4335 0 120deg,#fbbc05 120deg 240deg,#34a853 240deg 360deg);display:flex;align-items:center;justify-content:center}
.chrome-logo i{display:block;width:7px;height:7px;border-radius:50%;background:#4285f4;border:1px solid #fff}
.ltr{font:bold 7px "Liberation Sans",sans-serif;fill:#fff}
.wa-badge{position:absolute;left:17px;top:13px;width:10px;height:10px;border-radius:50%;background:#e81123;color:#fff;font:bold 8px/10px "Liberation Sans",sans-serif;text-align:center}
.tray{position:absolute;left:1234px;top:0;height:26px;display:flex;align-items:center;gap:6px;width:113px;border-right:1px solid #333}
.clock{display:flex;flex-direction:column;align-items:flex-end;width:42px;font-size:7.800px;line-height:11px;color:#d5d5d5;white-space:nowrap}
```
